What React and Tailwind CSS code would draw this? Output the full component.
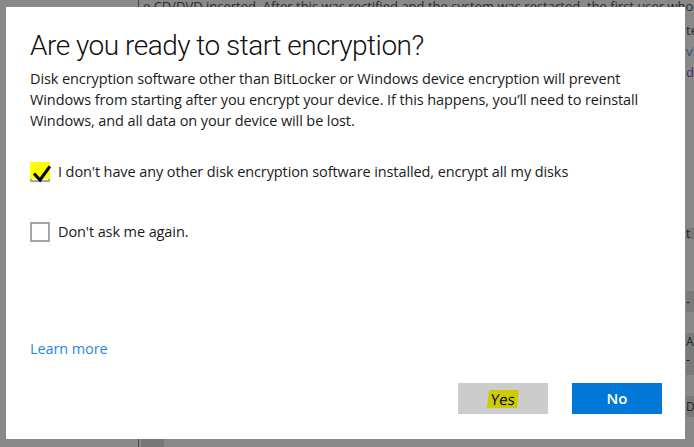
import React from "react";

function Check() {
  return (
    <svg width="20" height="20" viewBox="0 0 20 20" className="absolute left-0 top-0">
      <path d="M3 10.5 L8 16 L17 3.5" fill="none" stroke="#000" strokeWidth="3" strokeLinecap="square" strokeLinejoin="miter" />
    </svg>
  );
}

export default function App() {
  const font = { fontFamily: '"Open Sans", "Noto Sans", sans-serif' };
  return (
    <div className="relative w-[694px] h-[447px] overflow-hidden bg-[#898989]" style={font}>
      {/* background window behind the dialog */}
      <div className="absolute left-[138px] top-0 h-full w-px bg-[#4a4a4a]" />
      <div className="absolute left-[143px] top-[-4px] whitespace-nowrap text-[13px] leading-[20px] text-[#2a2a2a]">
        e CD/DVD inserted. After this was rectified and the system was restarted, the first user who
      </div>
      <div className="absolute left-[686px] top-[20px] flex w-[8px] flex-col overflow-hidden text-[13px] leading-[21px] text-[#2a2a2a]">
        <span>te</span>
        <span className="text-[#1d4f8a]">vi</span>
        <span className="text-[#4b2a6a]">di</span>
      </div>
      <div className="absolute left-[686px] top-[228px] h-[11px] w-[8px] overflow-hidden bg-[#787878] text-[12px] leading-[11px] text-[#222]">t</div>
      <div className="absolute left-[686px] top-[291px] h-[21px] w-[8px] overflow-hidden bg-[#7a7a7a] text-[12px] leading-[21px] text-[#222]">-</div>
      <div className="absolute left-[686px] top-[333px] h-[42px] w-[8px] overflow-hidden bg-[#7a7a7a] text-[12px] leading-[18px] text-[#222]">Ac<br />-</div>
      <div className="absolute left-[686px] top-[396px] h-[21px] w-[8px] overflow-hidden bg-[#7a7a7a] text-[12px] leading-[21px] text-[#222]">Du</div>
      <div className="absolute left-[141px] top-[439px] h-[8px] w-[23px] bg-[#787878]" />

      {/* dialog */}
      <div className="absolute left-[6px] top-[7px] flex h-[432px] w-[679px] flex-col bg-white pl-[24px] pr-[23px] pb-[25px]">
        <h1
          className="mt-[19px] text-[28px] font-light leading-[40px] tracking-[-0.5px] text-[#111]"
          style={{ fontFamily: 'Roboto, "Open Sans", sans-serif' }}
        >
          Are you ready to start encryption?
        </h1>
        <p className="mt-[2px] text-[14.5px] leading-[21px] text-[#1a1a1a] tracking-[-0.1px]">
          Disk encryption software other than BitLocker or Windows device encryption will prevent
          <br />
          Windows from starting after you encrypt your device. If this happens, you’ll need to reinstall
          <br />
          Windows, and all data on your device will be lost.
        </p>
        <label className="mt-[30px] flex items-center gap-[8px] text-[14.5px] text-[#1a1a1a] tracking-[-0.1px]">
          <span className="relative h-[20px] w-[20px] shrink-0 border-2 border-[#a6a6a6] bg-white">
            <span className="absolute left-[-2px] top-[-2px] h-[17px] w-[20px] bg-[#ffff00]" />
            <Check />
          </span>
          <span>I don't have any other disk encryption software installed, encrypt all my disks</span>
        </label>
        <label className="mt-[38px] flex items-center gap-[8px] text-[14.5px] text-[#1a1a1a] tracking-[-0.1px]">
          <span className="h-[20px] w-[20px] shrink-0 border-2 border-[#a6a6a6] bg-white" />
          <span>Don't ask me again.</span>
        </label>
        <div className="mt-auto flex flex-col">
          <a className="text-[14.5px] text-[#1f88e5] tracking-[-0.1px]">Learn more</a>
          <div className="mt-[23px] flex justify-end gap-[24px]">
            <button className="flex h-[31px] w-[90px] items-center justify-center bg-[#cccccc] text-[15px] text-black">
              <span className="bg-[#cccc00] px-[3px] leading-[18px] -skew-x-6">Yes</span>
            </button>
            <button className="flex h-[31px] w-[90px] items-center justify-center bg-[#0078d7] text-[15px] font-semibold text-white">
              No
            </button>
          </div>
        </div>
      </div>
    </div>
  );
}
